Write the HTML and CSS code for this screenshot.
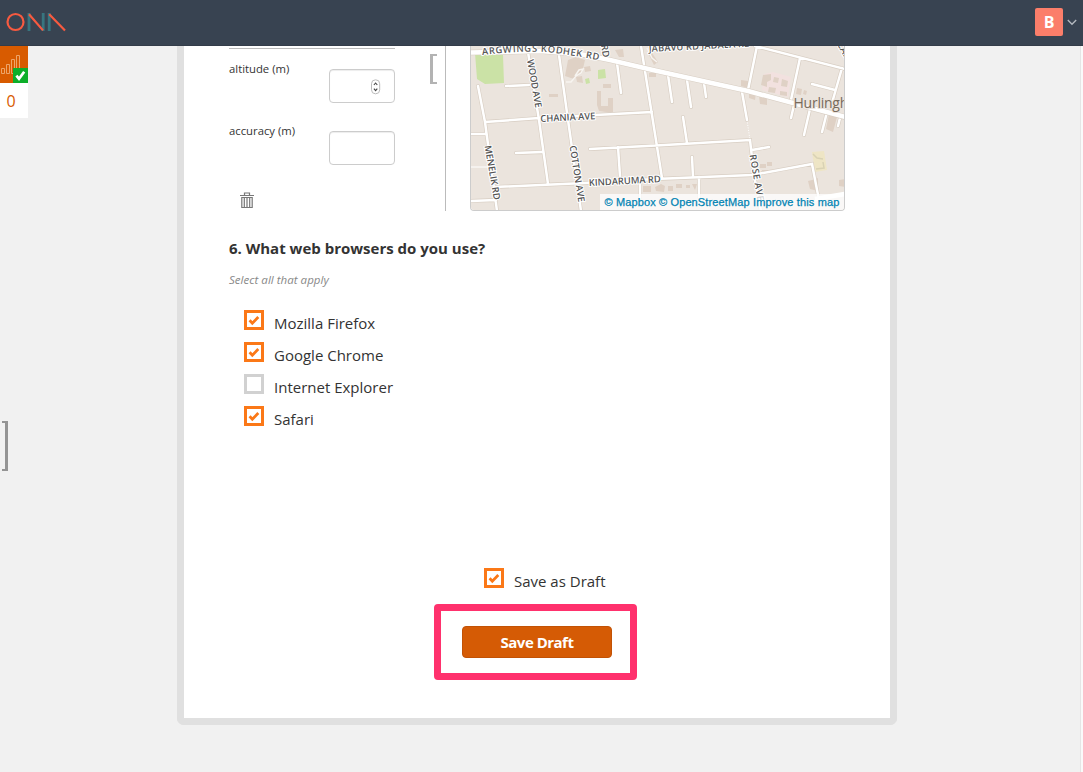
FILE: index.html
```html
<!DOCTYPE html>
<html lang="en">
<head>
<meta charset="utf-8">
<title>Ona</title>
<link rel="stylesheet" href="styles.css">
</head>
<body>
<svg class="defs" width="0" height="0">
  <symbol id="check" viewBox="0 0 20 20"><path d="M5.6 10.3l2.7 2.9 6-6.1" fill="none" stroke="#fb7817" stroke-width="2.8"/></symbol>
</svg>
<header class="topbar">
  <svg class="logo" width="62" height="22" viewBox="0 0 62 22" fill="none" stroke-width="2.2">
    <circle cx="10.5" cy="11" r="8" stroke="#f75a40"/>
    <path d="M24 2v18M38.2 2v18M44.2 2v18" stroke="#38757f" stroke-width="2.8"/>
    <path d="M24 3.3L38 19.4M44.2 3.3L60 19.4" stroke="#f75a40"/>
  </svg>
  <div class="account">
    <span class="avatar">B</span>
    <svg width="10" height="7" viewBox="0 0 10 7"><path d="M.8 1L5 5.3 9.2 1" fill="none" stroke="#b5bac0" stroke-width="1.3"/></svg>
  </div>
</header>
<main class="page">
  <aside class="side">
    <div class="status">
      <svg width="28" height="37" viewBox="0 0 28 37">
        <g fill="none" stroke="#eda468"><path d="M1.5 22.5h3v5h-3zM6.5 18.5h3v9h-3zM11.5 13.5h3v14h-3zM16.5 9.5h3v18h-3z"/></g>
        <path d="M13 22h15v15H13z" fill="#0cae29"/>
        <path d="M16.4 29.6l2.6 3.2 5.2-7" fill="none" stroke="#fff" stroke-width="2.7"/>
      </svg>
    </div>
    <div class="queue">0</div>
    <div class="drawer"></div>
  </aside>
  <section class="paper">
    <div class="geo">
      <div class="fields">
        <div class="field"><label>altitude (m)</label>
          <div class="box"><svg width="10" height="16" viewBox="0 0 10 16" fill="none"><rect x=".5" y=".8" width="8.2" height="14" rx="4" stroke="#bbb"/><path d="M2.9 6l1.7-2 1.7 2M2.9 9.6l1.7 2 1.7-2" stroke="#444" stroke-width="1.1"/></svg></div></div>
        <div class="field"><label>accuracy (m)</label><div class="box"></div></div>
        <svg class="trash" width="14" height="17" viewBox="0 0 14 17" fill="none" stroke="#777"><path d="M0 3.5h14M4.5 3V1h5v2M1.8 5.5h10.4v10H1.8zM4.3 6v9M7 6v9M9.7 6v9" stroke-width="1.2"/></svg>
      </div>
      <div class="collapse"><i></i></div>
      <div class="map">
        <svg width="374" height="165" viewBox="471 46 374 165">
          <defs>
            <path id="argwings" d="M482 55Q535 49 562 54Q583 57 606 61.5"/>
            <g id="roads">
              <path d="M478 86L485 122 497 211M528 52L539 120 548 184M559 55L568 120 581 211M485 122L539 118 652 112M470 134h15M506 86l23-1M516 153l26-1M470 201l26-1M495 187L585 183 655 179 752 175 812 164 819 200M590 149l75-4 85-5 4 35 7 36M618 147l2 29M641 46L662 178M617 63l4 30M757 46L748 90M755 46L845 69M800 58l-9 42v2M794 105l-3 13M668 75l4 27M687 80l4 27M704 83l2 14M742 92l5 28M683 117l4 26M692 157l1 20M699 177v20M752 150l17-3M812 84l23 6M842 68l-10 35M810 109l-6 26M827 112l-5 20M840 118l-2 8M640 183v15"/>
            </g>
          </defs>
          <path fill="#ebe4dd" d="M470 46h375v165H470z"/>
          <path fill="#cbe2a6" d="M475 53l28 2 1 28-19 1-8-5zM598 70l7-1 1 9-8 1zM585 79l4-1 1 5-4 1z"/>
          <path fill="#f2e1df" d="M764 74l9-2 18 5-3 20-26-7z"/>
          <path fill="#eee5c5" d="M812 152l12-1 3 19-12 2z"/>
          <g fill="#dfd1c5"><path d="M568 60l8-3 9 3-3 13-8 6-9-3zM584 67l6-1 1 5-6 1zM576 77l6-1 1 7-6-1zM603 84h8v4h-8zM549 94h9v3h-9zM597 91h4v15h7v-8h5v15l-14-2-2-6zM615 50l8-1 1 8h-5zM650 50l8 12-4 3-6-12zM649 73h7v4h-7zM741 80l7 1v7l-7-2zM749 91l7 2-1 7-6-2zM759 96l8 1v8l-7-1zM797 88l5 1-1 6-5-1zM804 90l3 1-1 4-3-1zM829 114l8 3-4 15-7-3zM808 181l8-2 2-1v13l-8-2zM839 180l6-1v8l-6-1z"/>
            <path d="M763 75l8-1v6l-4 2v5l-6-2zM774 77l5 1-1 5-5-1zM782 79l6 2-1 6-6-1zM769 87l7 1-1 5-7-1zM780 91l7 1v4l-7-1z"/>
            <path d="M655 187l6-3 4 2-1 6-8-1zM668 186h5v5h-5zM676 184h6v4h-6zM686 185h4v3h-4zM692 184h5l-2 6zM643 186h8v6h-8zM760 164h6v4h-6zM767 162h5v4h-5zM762 170h7v3h-7z"/></g>
          <path d="M813 154l4 4 6 1M816 169l8-1-1-6" stroke="#d9d2b4" stroke-width="1.5" fill="none"/>
          <path d="M566 82h5l5-6 5-3 2-4-4 1-4 6M647 48l5 10 5 4" stroke="#f7f4f0" stroke-width="1.5" fill="none"/>
          <path d="M747 120l3 20" stroke="#fff" stroke-dasharray="1 1.5"/>
          <path d="M470 167h18" stroke="#fff"/>
          <g fill="none" stroke-linecap="round"><use href="#roads" stroke="#d8cec3" stroke-width="3.8"/><use href="#roads" stroke="#fff" stroke-width="2.5"/></g>
          <path d="M470 52.5L540 51 580 54 610 60 655 70.5 748 91 793 103 845 117" fill="none" stroke="#d8cec3" stroke-width="5.6"/>
          <path d="M470 52.5L540 51 580 54 610 60 655 70.5 748 91 793 103 845 117M815 199L845 194" fill="none" stroke="#fff" stroke-width="4.6"/>
          <g class="streets">
            <text textLength="118"><textPath href="#argwings" textLength="118">ARGWINGS KODHEK RD</textPath></text>
            <text transform="translate(601 45) rotate(81)">RD</text>
            <text transform="translate(649 52) rotate(-3)" textLength="102">JABAVU RD JADALA RD</text>
            <text transform="translate(837 44) rotate(62)">CAR</text>
            <text transform="translate(527 60) rotate(80)" textLength="49">WOOD AVE</text>
            <text transform="translate(540.5 122) rotate(-3)" textLength="55">CHANIA AVE</text>
            <text transform="translate(484.5 146) rotate(80)" textLength="55">MENELIK RD</text>
            <text transform="translate(569.5 146) rotate(81)" textLength="57">COTTON AVE</text>
            <text transform="translate(589 186) rotate(-3)" textLength="72">KINDARUMA RD</text>
            <text transform="translate(749.5 155) rotate(80)" textLength="47">ROSE AVE</text>
          </g>
          <text class="district" x="793.5" y="108" textLength="75">Hurlingham</text>
        </svg>
        <div class="credit">© Mapbox © OpenStreetMap Improve this map</div>
      </div>
    </div>
    <h2 class="question"><span>6. What web browsers do you use?</span></h2>
    <p class="hint">Select all that apply</p>
    <div class="options">
      <label class="option"><span class="tick on"><svg><use href="#check"/></svg></span><span class="name">Mozilla Firefox</span></label>
      <label class="option"><span class="tick on"><svg><use href="#check"/></svg></span><span class="name">Google Chrome</span></label>
      <label class="option"><span class="tick"></span><span class="name">Internet Explorer</span></label>
      <label class="option"><span class="tick on"><svg><use href="#check"/></svg></span><span class="name">Safari</span></label>
    </div>
    <div class="actions">
      <label class="option draft"><span class="tick on"><svg><use href="#check"/></svg></span><span class="name">Save as Draft</span></label>
      <div class="highlight"><button class="save">Save Draft</button></div>
    </div>
  </section>
  <div class="edge"></div>
</main>
</body>
</html>
```
FILE: styles.css
```css
* { box-sizing: border-box; }
body { margin: 0; width: 1083px; height: 772px; overflow: hidden; background: #f1f1f1; font-family: "Open Sans", sans-serif; color: #333; }
.defs { display: block; }
.topbar { height: 46px; background: #384351; border-bottom: 1px solid #333c49; display: flex; justify-content: space-between; align-items: center; padding: 0 6px 0 4.5px; }
.logo { margin-bottom: 1px; }
.account { display: flex; align-items: center; gap: 4px; margin-top: -1px; }
.avatar { width: 28px; height: 28px; border-radius: 2px; background: #fb7e6a; color: #fff; font-weight: 700; font-size: 16px; line-height: 28px; text-align: center; }
.page { display: flex; height: 726px; }
.side { width: 177px; }
.status { width: 28px; height: 37px; background: #d85b00; }
.queue { width: 28px; height: 35px; background: #fff; color: #d85b00; font-size: 16px; line-height: 36px; padding-left: 6.5px; }
.drawer { width: 6px; height: 50px; margin: 303px 0 0 2px; border: 2px solid #949494; border-width: 2px 3px 2px 0; }
.paper { width: 720px; height: 679px; background: #fff; border: 7px solid #e0e0e0; border-top: 0; border-radius: 0 0 7px 7px; padding: 0 45px; }
.geo { display: flex; height: 165px; }
.fields { width: 166px; padding-top: 2px; }
.fields::before { content: ""; display: block; height: 1px; background: #bbb; margin-bottom: 20px; }
.field { display: flex; justify-content: space-between; height: 62px; font-size: 11.3px; }
.field label { line-height: 15px; margin-top: -8px; }
.box { width: 66px; height: 34px; border: 1px solid #ccc; border-radius: 4px; box-shadow: inset 0 1px 1px #00000013; padding: 9px 0 0 41px; }
.box svg, .trash { display: block; }
.trash { margin: -1px 0 0 11px; }
.collapse { width: 51px; border-right: 1px solid #bbb; padding: 8px 0 0 35px; }
.collapse i { display: block; width: 7px; height: 30px; border: 2px solid #b3b3b3; border-width: 2px 0 2px 3px; }
.map { position: relative; width: 375px; height: 165px; margin-left: 24px; border: 1px solid #ccc; border-top: 0; border-radius: 0 0 4px 4px; overflow: hidden; }
.map svg { display: block; }
.streets { font: 600 9.4px "Open Sans", sans-serif; fill: #555; stroke: #fff; stroke-width: 2px; paint-order: stroke; stroke-linejoin: round; }
.district { font: 14px "Open Sans", sans-serif; fill: #786a5b; stroke: #ebe4dd; stroke-width: 2px; paint-order: stroke; }
.credit { position: absolute; right: 0; bottom: 0; width: 244px; height: 16px; background: #ffffffbf; padding-left: 4.5px; font: 11px/16px "Liberation Sans", sans-serif; letter-spacing: .13px; color: #0083b3; -webkit-text-stroke: .25px #0083b3; white-space: nowrap; }
.question { margin: 26px 0 0; font-size: 15px; line-height: 22px; font-weight: 700; }
.hint { margin: 13px 0 0; font-size: 11.5px; line-height: 16px; font-style: italic; color: #888; letter-spacing: .03px; }
.options { margin: 22px 0 0 15px; }
.option { display: flex; gap: 10px; height: 32px; }
.tick { width: 20px; height: 20px; border: 3px solid #d1d1d1; }
.tick.on { border-color: #fb7817; }
.tick svg { display: block; width: 20px; height: 20px; margin: -3px; }
.name { font-size: 15px; line-height: 22px; padding-top: 2px; }
.actions { margin-top: 130px; }
.draft { margin-left: 255px; height: 36px; }
.highlight { width: 203px; height: 76px; margin-left: 205px; border: 7px solid #ff316d; border-radius: 4px; padding: 15px 0 0 21px; }
.save { display: block; width: 150px; height: 32px; padding: 0; border: 1px solid #c25205; border-radius: 4px; background: #d55b05; color: #fff; font: 700 15px/28px "Open Sans", sans-serif; letter-spacing: -.5px; }
.edge { width: 3px; margin-left: auto; background: #fafafa; border-left: 1px solid #e5e5e5; }
```
